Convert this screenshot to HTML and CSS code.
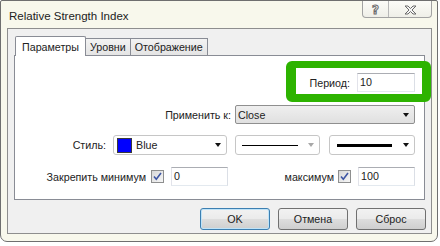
FILE: index.html
```html
<!DOCTYPE html>
<html lang="ru">
<head>
<meta charset="utf-8">
<title>Relative Strength Index</title>
<link rel="stylesheet" href="styles.css">
</head>
<body>
<div class="window">
  <div class="titlebar">
    <span class="title">Relative Strength Index</span>
    <div class="caption-btns">
      <span class="cbtn help">?</span>
      <span class="cbtn close">
        <svg width="13" height="10" viewBox="-1 -1 13 10"><path d="M0 0H3L5.5 2.5L8 0H11L7 4L11 8H8L5.5 5.5L3 8H0L4 4Z" fill="#f6f6f6" stroke="#6a6a6a" stroke-width="1" stroke-linejoin="round"/></svg>
      </span>
    </div>
  </div>
  <div class="client">
    <div class="tabs">
      <div class="tab active">Параметры</div>
      <div class="tab">Уровни</div>
      <div class="tab">Отображение</div>
    </div>
    <div class="panel">
      <div class="row r1">
        <div class="highlight">
          <span class="lbl">Период:</span>
          <div class="input w58">10</div>
        </div>
      </div>
      <div class="row r2">
        <span class="lbl">Применить к:</span>
        <div class="combo gray w180"><span>Close</span><i class="arrow"></i></div>
      </div>
      <div class="row r3">
        <span class="lbl">Стиль:</span>
        <div class="combo w114"><span class="swatch"></span><span class="cname">Blue</span><i class="arrow"></i></div>
        <div class="combo w85 line-combo"><span class="line thin"></span><i class="arrow disabled"></i></div>
        <div class="combo w86 line-combo2"><span class="line thick"></span><i class="arrow"></i></div>
      </div>
      <div class="row r4">
        <div class="group g-min">
          <span class="lbl">Закрепить минимум</span>
          <span class="check"><svg width="13" height="13" viewBox="0 0 13 13"><path d="M3 6.5L5.3 9.2L10 3" fill="none" stroke="#3d55a3" stroke-width="1.6"/></svg></span>
          <div class="input w57">0</div>
        </div>
        <div class="group g-max">
          <span class="lbl">максимум</span>
          <span class="check"><svg width="13" height="13" viewBox="0 0 13 13"><path d="M3 6.5L5.3 9.2L10 3" fill="none" stroke="#3d55a3" stroke-width="1.6"/></svg></span>
          <div class="input w57">100</div>
        </div>
      </div>
    </div>
    <div class="buttons">
      <button class="btn default">OK</button>
      <button class="btn">Отмена</button>
      <button class="btn">Сброс</button>
    </div>
  </div>
</div>
</body>
</html>
```
FILE: styles.css
```css
body {
  margin: 0;
  background: #ffffff;
  font-family: "Liberation Sans", Arial, sans-serif;
  font-size: 10.7px;
  color: #222;
}

.window {
  box-sizing: border-box;
  width: 438px;
  height: 242px;
  border: 1px solid #6f6f6f;
  border-radius: 2px 2px 7px 7px;
  background: #f8f8ec;
  padding: 0 5px 7px 6px;
  display: flex;
  flex-direction: column;
}

.titlebar {
  flex: none;
  height: 27px;
  display: flex;
  justify-content: space-between;
  align-items: flex-start;
  padding-left: 2px;
}

.title {
  font-size: 11.5px;
  margin-top: 9px;
  color: #222;
}

.caption-btns {
  box-sizing: border-box;
  display: flex;
  width: 70px;
  height: 17px;
  border: 1px solid #a2a2a2;
  border-top: none;
  border-radius: 0 0 4px 4px;
  background: linear-gradient(#fcfcf8, #efefe8);
}

.cbtn {
  display: flex;
  align-items: center;
  justify-content: center;
}

.cbtn.help {
  width: 25px;
  border-right: 1px solid #b8b8b8;
  font-family: "DejaVu Sans", sans-serif;
  font-weight: bold;
  font-size: 12px;
  color: #f6f6f6;
  -webkit-text-stroke: 1px #6a6a6a;
  padding-top: 1px;
}

.cbtn.close {
  flex: 1;
  padding-top: 1px;
}

.client {
  flex: 1;
  display: flex;
  flex-direction: column;
  border: 1px solid #8e8e8e;
  background: #f0f0f0;
  padding: 7px 6px 0 6px;
}

.tabs {
  display: flex;
  align-items: flex-end;
  height: 19px;
  padding-left: 1px;
}

.tab {
  box-sizing: border-box;
  height: 17px;
  padding: 2px 4px 0 4px;
  line-height: 13px;
  border: 1px solid #898c95;
  border-left: none;
  border-bottom: none;
  background: linear-gradient(#f3f3f3, #e4e4e4);
}

.tab.active {
  height: 20px;
  margin-bottom: -1px;
  padding: 4px 6px 0 6px;
  border-left: 1px solid #898c95;
  border-radius: 2px 2px 0 0;
  background: #ffffff;
  position: relative;
  z-index: 1;
}

.panel {
  box-sizing: border-box;
  height: 145px;
  flex: none;
  border: 1px solid #898c95;
  background: #ffffff;
  padding: 17px 9px 0 0;
  display: flex;
  flex-direction: column;
}

.row {
  display: flex;
  justify-content: flex-end;
  align-items: center;
}

.r2 { margin-top: 13px; }
.r3 { margin-top: 11px; }
.r4 { margin-top: 12px; }

.lbl {
  white-space: nowrap;
}

.highlight {
  position: relative;
  display: flex;
  align-items: center;
}

.highlight::before {
  content: "";
  position: absolute;
  top: -12px;
  bottom: -10px;
  right: -16px;
  width: 145px;
  box-sizing: border-box;
  border-style: solid;
  border-color: #2db300;
  border-width: 7px 9px 8px 10px;
  border-radius: 6px;
  pointer-events: none;
}

.highlight .lbl { margin-right: 7px; }
.r2 .lbl { margin-right: 4px; }
.r3 .lbl { margin-right: 7px; }

.input {
  box-sizing: border-box;
  height: 19px;
  border: 1px solid;
  border-color: #abadb3 #dbdfe6 #e3e9ef #e2e3ea;
  background: #ffffff;
  padding: 0 2px;
  line-height: 17px;
}

.w58 { width: 58px; }
.w57 { width: 57px; }
.w180 { width: 180px; }
.w114 { width: 114px; }
.w85 { width: 85px; }
.w86 { width: 86px; }

.combo {
  box-sizing: border-box;
  height: 20px;
  border: 1px solid #c6c6c6;
  border-radius: 3px;
  background: #ffffff;
  display: flex;
  align-items: center;
  padding: 0 5px 0 3px;
}

.combo.gray {
  height: 19px;
  padding-left: 2px;
  border-color: #8f8f8f;
  border-radius: 2px;
  background: linear-gradient(#efefef, #e0e0e0);
}

.w114 { margin-right: 8px; }
.w85 { margin-right: 9px; }

.arrow {
  margin-left: auto;
  width: 0;
  height: 0;
  border-left: 3px solid transparent;
  border-right: 3px solid transparent;
  border-top: 4px solid #111;
}

.arrow.disabled { border-top-color: #a8a8a8; }

.swatch {
  box-sizing: border-box;
  width: 15px;
  height: 15px;
  background: #0000ff;
  border: 1px solid #3a3a3a;
}

.cname { margin-left: 4px; }

.line { display: block; background: #000; }
.line.thin { width: 56px; height: 1px; margin-left: 3px; }
.line.thick { width: 55px; height: 3px; margin-left: 4px; }

.group {
  display: flex;
  align-items: center;
}

.g-min { margin-right: 55px; }
.g-max { width: 132px; justify-content: flex-end; }

.g-min .lbl { margin-right: 5px; }
.g-max .lbl { margin-right: 4px; }

.check {
  box-sizing: border-box;
  width: 13px;
  height: 13px;
  border: 1px solid #8e8f8f;
  background: linear-gradient(135deg, #d8d8d8, #f6f6f6);
  margin-right: 7px;
  display: flex;
}

.check svg { margin: -1px; }

.buttons {
  display: flex;
  justify-content: flex-end;
  gap: 8px;
  margin-top: 8px;
  margin-right: -1px;
}

.btn {
  box-sizing: border-box;
  width: 70px;
  height: 22px;
  border: 1px solid #707070;
  border-radius: 3px;
  background: linear-gradient(#f2f2f2, #ebebeb 48%, #dddddd 52%, #cfcfcf);
  font-family: inherit;
  font-size: 10.7px;
  color: #222;
  padding: 0;
}

.btn.default {
  border-color: #3c7fb1;
  box-shadow: inset 0 0 0 1px #bfe3f8;
}
```
